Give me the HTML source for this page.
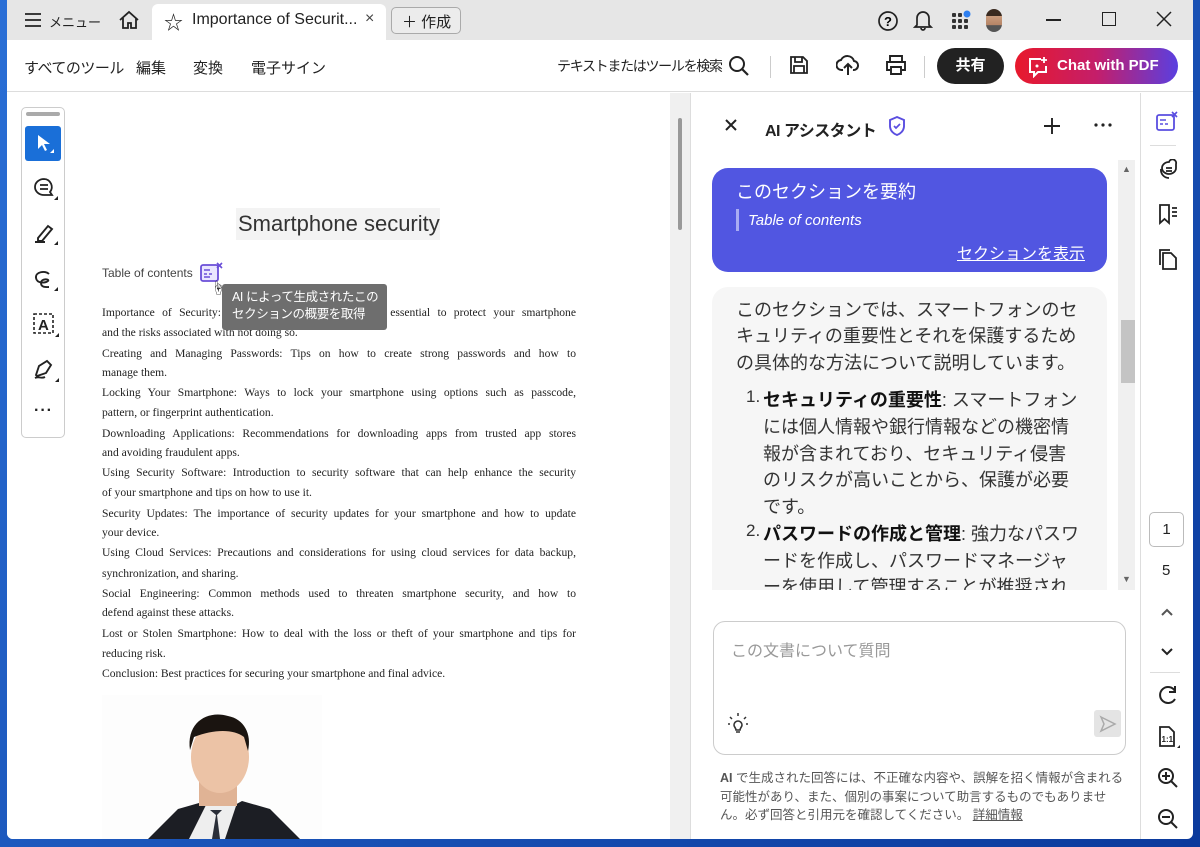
<!DOCTYPE html>
<html><head><meta charset="utf-8"><style>
*{margin:0;padding:0;box-sizing:border-box}
body{width:1200px;height:847px;overflow:hidden;position:relative;background:linear-gradient(135deg,#2a6fd6,#0b3a9c);font-family:"Liberation Sans","Noto Sans CJK JP",sans-serif;color:#222}
.a{position:absolute;white-space:nowrap}
#win{position:absolute;left:7px;top:0;width:1186px;height:839px;background:#fff;overflow:hidden;border-radius:0 0 6px 6px}
.serif{font-family:"Liberation Serif","Noto Serif CJK SC",serif;font-size:11.6px;color:#222}
.dl{position:absolute;left:95px;width:474px;text-align:justify;text-align-last:justify;white-space:nowrap;overflow:hidden}
.dl.e{text-align-last:left}
.r{position:absolute;white-space:nowrap;font-size:18px;color:#333;left:51px}
svg{position:absolute}
</style></head><body>
<div id="win">
<!-- title bar -->
<div class="a" style="left:0;top:0;width:1186px;height:40px;background:#e6e6e6"></div>
<svg style="left:17px;top:12px" width="18" height="16"><path d="M1 2h16M1 8h16M1 14h16" stroke="#222" stroke-width="1.8"/></svg>
<div class="a" style="left:42px;top:12px;font-size:13px">メニュー</div>
<svg style="left:111px;top:10px" width="22" height="20"><path d="M2 10L11 2l9 8M5 8v10h5v-5h3v5h5V8" fill="none" stroke="#222" stroke-width="1.8"/></svg>
<div class="a" style="left:145px;top:4px;width:234px;height:36px;background:#fff;border-radius:6px 6px 0 0"></div>
<div class="a" style="left:157px;top:8px;font-size:19px">☆</div>
<div class="a" style="left:185px;top:11px;font-size:16px;color:#222">Importance of Securit...</div>
<div class="a" style="left:358px;top:10px;font-size:16px;color:#444">×</div>
<div class="a" style="left:384px;top:7px;width:70px;height:27px;border:1px solid #aaa;border-radius:5px;background:#ececec;font-size:15px;padding:3px 0 0 10px">＋ 作成</div>
<svg style="left:870px;top:10px" width="22" height="22"><circle cx="11" cy="11" r="9" fill="none" stroke="#222" stroke-width="1.7"/><text x="7" y="16" font-size="13" font-weight="bold" font-family="Liberation Sans">?</text></svg>
<svg style="left:906px;top:9px" width="20" height="22"><path d="M4 16V9a6 6 0 0112 0v7l2 2H2zM8 19a2 2 0 004 0" fill="none" stroke="#222" stroke-width="1.7"/></svg>
<svg style="left:943px;top:10px" width="22" height="20"><g fill="#333"><rect x="2" y="3" width="4" height="4" rx="1"/><rect x="8" y="3" width="4" height="4" rx="1"/><rect x="2" y="9" width="4" height="4" rx="1"/><rect x="8" y="9" width="4" height="4" rx="1"/><rect x="14" y="9" width="4" height="4" rx="1"/><rect x="2" y="15" width="4" height="4" rx="1"/><rect x="8" y="15" width="4" height="4" rx="1"/><rect x="14" y="15" width="4" height="4" rx="1"/></g><circle cx="17" cy="4" r="3.5" fill="#2d7ff0"/></svg>
<div class="a" style="left:979px;top:9px;width:16px;height:23px;border-radius:8px;background:linear-gradient(#3a2a20 30%,#c99b7c 31%,#b58466 70%,#555 71%)"></div>
<div class="a" style="left:1039px;top:19px;width:15px;height:1.5px;background:#222"></div>
<div class="a" style="left:1095px;top:12px;width:14px;height:14px;border:1.5px solid #222"></div>
<svg style="left:1149px;top:11px" width="16" height="16"><path d="M1 1l14 14M15 1L1 15" stroke="#222" stroke-width="1.5"/></svg>
<!-- toolbar -->
<div class="a" style="left:0;top:40px;width:1186px;height:52px;background:#fff;border-bottom:1px solid #ddd"></div>
<div class="a" style="left:17px;top:57px;font-size:15px;letter-spacing:-0.5px">すべてのツール</div>
<div class="a" style="left:129px;top:57px;font-size:15px">編集</div>
<div class="a" style="left:186px;top:57px;font-size:15px">変換</div>
<div class="a" style="left:244px;top:57px;font-size:15px">電子サイン</div>
<div class="a" style="left:550px;top:56px;font-size:14px;letter-spacing:-1.3px">テキストまたはツールを検索</div>
<svg style="left:721px;top:55px" width="22" height="22"><circle cx="9" cy="9" r="7" fill="none" stroke="#222" stroke-width="2"/><path d="M14 14l6 6" stroke="#222" stroke-width="2.2"/></svg>
<div class="a" style="left:763px;top:56px;width:1px;height:22px;background:#ccc"></div>
<svg style="left:782px;top:55px" width="20" height="20"><path d="M2 2h12l4 4v12H2zM6 2v5h7V2M5 11h10v7H5z" fill="none" stroke="#222" stroke-width="1.8"/></svg>
<svg style="left:829px;top:53px" width="24" height="24"><path d="M7 17H6a5 5 0 01-1-10 7 7 0 0113 1 4 4 0 01-1 9M12 22V11M8 15l4-4 4 4" fill="none" stroke="#222" stroke-width="2"/></svg>
<svg style="left:878px;top:54px" width="22" height="22"><path d="M5 8V2h12v6M5 16H2V8h18v8h-3M6 13h10v7H6z" fill="none" stroke="#222" stroke-width="1.9"/></svg>
<div class="a" style="left:917px;top:56px;width:1px;height:22px;background:#ccc"></div>
<div class="a" style="left:930px;top:48px;width:67px;height:36px;border-radius:18px;background:#222;color:#fff;font-size:15px;font-weight:bold;text-align:center;line-height:36px">共有</div>
<div class="a" style="left:1008px;top:48px;width:163px;height:36px;border-radius:18px;background:linear-gradient(90deg,#e8192c,#c41e6a 50%,#5a3fe0);color:#fff;font-size:15px;font-weight:bold;line-height:36px;padding-left:42px">Chat with PDF</div>
<svg style="left:1020px;top:56px" width="24" height="22"><path d="M14 3H3v13h4v4l4-4h8v-6" fill="none" stroke="#fff" stroke-width="2"/><path d="M17 1v6M14 4h6" stroke="#fff" stroke-width="1.8"/><circle cx="10" cy="10" r="1.5" fill="#fff"/></svg>
<!-- doc area -->
<div class="a" style="left:0;top:93px;width:663px;height:746px;background:#fff"></div>
<div class="a" style="left:663px;top:93px;width:20px;height:746px;background:#f0f0f0"></div>
<div class="a" style="left:671px;top:118px;width:4px;height:112px;background:#999;border-radius:2px"></div>
<div class="a" style="left:683px;top:93px;width:1px;height:746px;background:#ddd"></div>
<div class="a" style="left:689px;top:440px;width:3px;height:50px;background:#999;border-radius:2px"></div>
<!-- left tools -->
<div class="a" style="left:14px;top:107px;width:44px;height:331px;border:1px solid #ccc;border-radius:5px;background:#fff"></div>
<div class="a" style="left:19px;top:112px;width:34px;height:4px;background:#aaa;border-radius:2px"></div>
<div class="a" style="left:18px;top:126px;width:36px;height:35px;background:#1a6fd8;border-radius:3px"></div>
<svg style="left:28px;top:133px" width="20" height="22"><path d="M3 2v14l4-4 3 6 2-1-3-6h6z" fill="#fff"/><path d="M19 20h-4l4-4z" fill="#fff"/></svg>
<svg style="left:26px;top:177px" width="26" height="24"><path d="M11 2a9 8 0 100 16h8l-2-3a8 8 0 00-6-13zM7 8h8M7 12h8" fill="none" stroke="#222" stroke-width="1.8"/><path d="M25 23h-4l4-4z" fill="#222"/></svg>
<svg style="left:26px;top:222px" width="26" height="24"><path d="M5 16l10-12 4 3-10 12H5zM2 20h10" fill="none" stroke="#222" stroke-width="1.9"/><path d="M25 23h-4l4-4z" fill="#222"/></svg>
<svg style="left:26px;top:268px" width="26" height="24"><path d="M16 6c-4-4-14-2-13 4s10 5 12 3-7-3-7 2 6 4 8 4" fill="none" stroke="#222" stroke-width="1.9"/><path d="M25 23h-4l4-4z" fill="#222"/></svg>
<svg style="left:25px;top:312px" width="28" height="26"><rect x="2" y="2" width="19" height="19" fill="none" stroke="#222" stroke-width="1.6" stroke-dasharray="3 2"/><text x="6" y="18" font-size="15" font-family="Liberation Sans" font-weight="bold" fill="#222">A</text><path d="M27 25h-4l4-4z" fill="#222"/></svg>
<svg style="left:25px;top:357px" width="28" height="26"><path d="M4 18l3-9 8-5 4 4-5 8-9 3zM3 21c4-2 6 1 10-1" fill="none" stroke="#222" stroke-width="1.9"/><path d="M27 25h-4l4-4z" fill="#222"/></svg>
<div class="a" style="left:27px;top:402px;font-size:16px;font-weight:bold;letter-spacing:1px">···</div>
<!-- page content -->
<div class="a" style="left:229px;top:208px;width:204px;height:32px;background:#f3f3f3"></div>
<div class="a" style="left:231px;top:211px;font-size:22px;color:#333">Smartphone security</div>
<div class="a" style="left:95px;top:266px;font-size:12px;color:#444">Table of contents</div>
<svg style="left:193px;top:262px" width="24" height="22"><rect x="1" y="3" width="17" height="16" rx="2" fill="#eae6ff" stroke="#6a4ed8" stroke-width="1.8"/><path d="M4 8h6M4 12h3M9 12h3M4 15h6" stroke="#6a4ed8" stroke-width="1.5"/><path d="M17 1l5 5M22 1l-5 5" stroke="#6a4ed8" stroke-width="1.6"/></svg>
<div class="a" style="left:204px;top:278px;font-size:14px">☝</div>
<div class="serif">
<div class="dl" style="top:306px">Importance of Security: Understanding why security is essential to protect your smartphone</div>
<div class="dl e" style="top:326px">and the risks associated with not doing so.</div>
<div class="dl" style="top:347px">Creating and Managing Passwords: Tips on how to create strong passwords and how to</div>
<div class="dl e" style="top:366px">manage them.</div>
<div class="dl" style="top:386px">Locking Your Smartphone: Ways to lock your smartphone using options such as passcode,</div>
<div class="dl e" style="top:406px">pattern, or fingerprint authentication.</div>
<div class="dl" style="top:427px">Downloading Applications: Recommendations for downloading apps from trusted app stores</div>
<div class="dl e" style="top:446px">and avoiding fraudulent apps.</div>
<div class="dl" style="top:466px">Using Security Software: Introduction to security software that can help enhance the security</div>
<div class="dl e" style="top:486px">of your smartphone and tips on how to use it.</div>
<div class="dl" style="top:507px">Security Updates: The importance of security updates for your smartphone and how to update</div>
<div class="dl e" style="top:526px">your device.</div>
<div class="dl" style="top:546px">Using Cloud Services: Precautions and considerations for using cloud services for data backup,</div>
<div class="dl e" style="top:567px">synchronization, and sharing.</div>
<div class="dl" style="top:587px">Social Engineering: Common methods used to threaten smartphone security, and how to</div>
<div class="dl e" style="top:606px">defend against these attacks.</div>
<div class="dl" style="top:627px">Lost or Stolen Smartphone: How to deal with the loss or theft of your smartphone and tips for</div>
<div class="dl e" style="top:647px">reducing risk.</div>
<div class="dl e" style="top:667px">Conclusion: Best practices for securing your smartphone and final advice.</div>
</div>
<!-- tooltip -->
<div class="a" style="left:215px;top:284px;width:165px;height:46px;background:#6e6e6e;border-radius:3px;color:#fff;font-size:12.5px;line-height:17px;padding:5px 0 0 10px;letter-spacing:-0.4px;overflow:hidden">AI によって生成されたこの<br>セクションの概要を取得</div>
<!-- photo -->
<svg style="left:95px;top:695px" width="220" height="144"><rect width="220" height="144" fill="#fdfdfd"/><path d="M46 144l30-30 28-8 18 10 18-10 28 8 30 30z" fill="#1c1e24"/><path d="M87 144l18-36h30l-12 36z" fill="#eee"/><path d="M108 115l6 5-4 24h8l-3-24 5-5z" fill="#2a2e38"/><rect x="97" y="85" width="38" height="26" fill="#e0b395"/><ellipse cx="118" cy="62" rx="29" ry="36" fill="#ecc3a6"/><path d="M88 55c-4-28 18-40 38-34 16 3 24 18 20 35l-4-14c-10-8-30-8-50 0z" fill="#1a1410"/></svg>
<!-- AI panel -->
<div class="a" style="left:684px;top:93px;width:449px;height:746px;background:#fff"></div>
<svg style="left:717px;top:118px" width="14" height="14"><path d="M2 2l10 10M12 2L2 12" stroke="#222" stroke-width="2"/></svg>
<div class="a" style="left:758px;top:117px;font-size:16px;font-weight:bold;letter-spacing:-0.5px">AI アシスタント</div>
<svg style="left:880px;top:115px" width="20" height="22"><path d="M10 2l7 3v6c0 5-4 8-7 9-3-1-7-4-7-9V5z" fill="none" stroke="#5a4ee0" stroke-width="1.9"/><path d="M7 11l2 2 4-4" fill="none" stroke="#5a4ee0" stroke-width="1.7"/></svg>
<svg style="left:1036px;top:117px" width="18" height="18"><path d="M9 1v16M1 9h16" stroke="#222" stroke-width="1.9"/></svg>
<svg style="left:1086px;top:122px" width="20" height="6"><circle cx="3" cy="3" r="1.6" fill="#222"/><circle cx="10" cy="3" r="1.6" fill="#222"/><circle cx="17" cy="3" r="1.6" fill="#222"/></svg>
<!-- chat scroll -->
<div class="a" style="left:1111px;top:160px;width:17px;height:430px;background:#f0f0f0"></div>
<div class="a" style="left:1114px;top:320px;width:14px;height:63px;background:#c4c4c4"></div>
<div class="a" style="left:1115px;top:164px;font-size:9px;color:#666">▲</div>
<div class="a" style="left:1115px;top:574px;font-size:9px;color:#666">▼</div>
<div class="a" style="left:705px;top:168px;width:395px;height:104px;background:#5156e1;border-radius:16px"></div>
<div class="a" style="left:729px;top:178px;font-size:18px;color:#fff">このセクションを要約</div>
<div class="a" style="left:729px;top:209px;width:3px;height:22px;background:#a9acf3"></div>
<div class="a" style="left:741px;top:212px;font-size:15px;color:#fff;font-style:italic">Table of contents</div>
<div class="a" style="left:950px;top:240px;font-size:16px;color:#fff;text-decoration:underline">セクションを表示</div>
<div class="a" style="left:705px;top:287px;width:395px;height:303px;background:#f6f6f6;border-radius:16px 16px 0 0;overflow:hidden">
<div class="r" style="left:24px;top:9px">このセクションでは、スマートフォンのセ</div>
<div class="r" style="left:24px;top:35px">キュリティの重要性とそれを保護するため</div>
<div class="r" style="left:24px;top:62px">の具体的な方法について説明しています。</div>
<div class="r" style="left:34px;top:100px;font-size:17px">1.</div>
<div class="r" style="top:99px"><b style="color:#111">セキュリティの重要性</b>: スマートフォン</div>
<div class="r" style="top:126px">には個人情報や銀行情報などの機密情</div>
<div class="r" style="top:153px">報が含まれており、セキュリティ侵害</div>
<div class="r" style="top:179px">のリスクが高いことから、保護が必要</div>
<div class="r" style="top:206px">です。</div>
<div class="r" style="left:34px;top:234px;font-size:17px">2.</div>
<div class="r" style="top:233px"><b style="color:#111">パスワードの作成と管理</b>: 強力なパスワ</div>
<div class="r" style="top:260px">ードを作成し、パスワードマネージャ</div>
<div class="r" style="top:286px">ーを使用して管理することが推奨され</div>
</div>
<!-- input -->
<div class="a" style="left:706px;top:621px;width:413px;height:134px;border:1.5px solid #ccc;border-radius:12px"></div>
<div class="a" style="left:724px;top:637px;font-size:16px;color:#999">この文書について質問</div>
<svg style="left:720px;top:712px" width="22" height="24"><path d="M11 1v3M3 5l2 2M19 5l-2 2M1 12h2M19 12h2" stroke="#333" stroke-width="1.5"/><path d="M7 13a4 4 0 118 0c0 2-2 3-2 5H9c0-2-2-3-2-5zM9 20h4" fill="none" stroke="#333" stroke-width="1.6"/></svg>
<div class="a" style="left:1087px;top:710px;width:27px;height:27px;background:#e4e4e4;border-radius:3px"></div>
<svg style="left:1092px;top:715px" width="18" height="18"><path d="M2 2l14 7-14 7 3-7z" fill="none" stroke="#aaa" stroke-width="1.5"/></svg>
<div class="a" style="left:713px;top:769px;font-size:12.5px;line-height:18.5px;color:#555;white-space:normal;width:410px"><b>AI</b> で生成された回答には、不正確な内容や、誤解を招く情報が含まれる可能性があり、また、個別の事案について助言するものでもありません。必ず回答と引用元を確認してください。 <u>詳細情報</u></div>
<!-- right rail -->
<div class="a" style="left:1133px;top:93px;width:1px;height:746px;background:#ddd"></div>
<svg style="left:1148px;top:111px" width="24" height="22"><rect x="2" y="4" width="17" height="15" rx="2" fill="none" stroke="#5a4ee0" stroke-width="1.8"/><path d="M5 9h6M5 13h3M10 13h3" stroke="#5a4ee0" stroke-width="1.5"/><path d="M17 1l5 5M22 1l-5 5" stroke="#5a4ee0" stroke-width="1.6"/></svg>
<div class="a" style="left:1143px;top:145px;width:26px;height:1px;background:#ddd"></div>
<svg style="left:1150px;top:159px" width="22" height="22"><path d="M12 3a7 6 0 107 6V5a3 3 0 00-7-2zM9 9h6M9 12h6" fill="none" stroke="#222" stroke-width="1.8"/><path d="M4 10a8 8 0 008 9" fill="none" stroke="#222" stroke-width="1.8"/></svg>
<svg style="left:1150px;top:203px" width="22" height="22"><path d="M3 2h9v18l-4.5-4L3 20zM15 5h5M15 9h5M15 13h5" fill="none" stroke="#222" stroke-width="1.8"/></svg>
<svg style="left:1150px;top:247px" width="22" height="24"><path d="M6 6h8l5 5v11H6zM3 18V3h10" fill="none" stroke="#222" stroke-width="1.8"/></svg>
<div class="a" style="left:1142px;top:512px;width:35px;height:35px;border:1px solid #bbb;border-radius:5px;text-align:center;line-height:33px;font-size:15px">1</div>
<div class="a" style="left:1155px;top:562px;font-size:15px">5</div>
<svg style="left:1152px;top:606px" width="16" height="12"><path d="M3 9l5-5 5 5" fill="none" stroke="#555" stroke-width="2"/></svg>
<svg style="left:1152px;top:646px" width="16" height="12"><path d="M3 3l5 5 5-5" fill="none" stroke="#222" stroke-width="2"/></svg>
<div class="a" style="left:1143px;top:672px;width:30px;height:1px;background:#ddd"></div>
<svg style="left:1150px;top:684px" width="22" height="22"><path d="M18 7a8 8 0 100 8M18 2v6h-6" fill="none" stroke="#222" stroke-width="2"/></svg>
<svg style="left:1150px;top:725px" width="24" height="24"><path d="M3 2h9l5 5v14H3z" fill="none" stroke="#222" stroke-width="1.8"/><text x="4.5" y="17" font-size="8" font-weight="bold" font-family="Liberation Sans" fill="#222">1:1</text><path d="M23 23h-3l3-3z" fill="#222"/></svg>
<svg style="left:1150px;top:767px" width="22" height="22"><circle cx="9" cy="9" r="7" fill="none" stroke="#222" stroke-width="2"/><path d="M14 14l6 6M9 5v8M5 9h8" stroke="#222" stroke-width="2"/></svg>
<svg style="left:1150px;top:808px" width="22" height="22"><circle cx="9" cy="9" r="7" fill="none" stroke="#222" stroke-width="2"/><path d="M14 14l6 6M5 9h8" stroke="#222" stroke-width="2"/></svg>
</div>
</body></html>
